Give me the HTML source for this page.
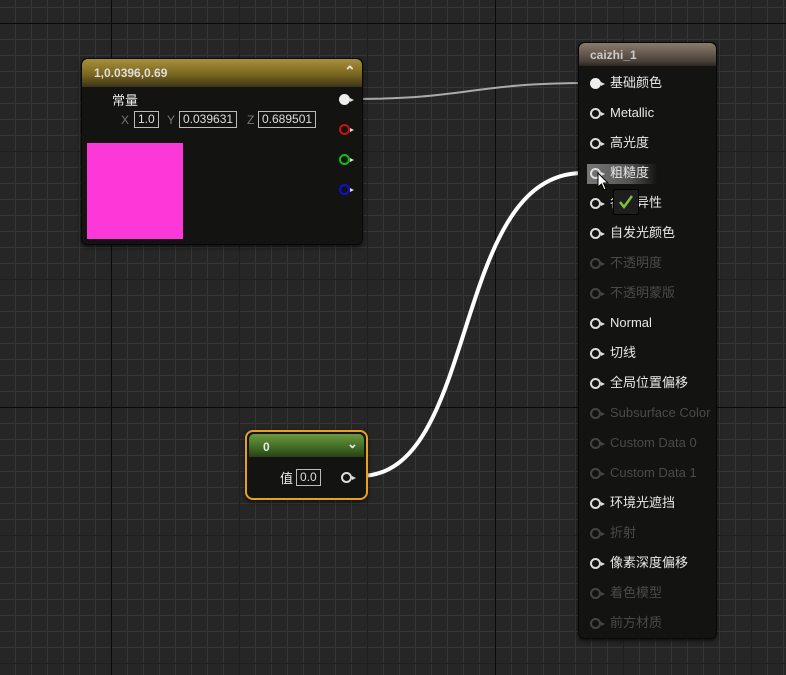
<!DOCTYPE html>
<html><head><meta charset="utf-8"><style>
*{margin:0;padding:0;box-sizing:border-box}
body{width:786px;height:675px;overflow:hidden;position:relative;font-family:"Liberation Sans","Noto Sans CJK SC",sans-serif;
background-color:#262626;
background-image:
linear-gradient(90deg,#0a0a0a 1px,transparent 1px),
linear-gradient(0deg,#0a0a0a 1px,transparent 1px),
linear-gradient(90deg,#1e1e1e 1px,transparent 1px),
linear-gradient(0deg,#1e1e1e 1px,transparent 1px),
linear-gradient(90deg,#363636 1px,transparent 1px),
linear-gradient(0deg,#363636 1px,transparent 1px);
background-size:384px 384px,384px 384px,128px 128px,128px 128px,16px 16px,16px 16px;
background-position:111px 0,0 24px,111px 0,0 24px,15px 0,0 8px;}
.node{position:absolute;background:#131412;border-radius:6px;box-shadow:0 2px 4px rgba(0,0,0,.6);border:1px solid #080808}
.t{position:absolute;color:#e8e8e8;font-size:12px;white-space:nowrap;line-height:14px}
.r{font-size:13px;line-height:15px}
.pin{position:absolute;width:11px;height:11px;border-radius:50%;border:2px solid #ddd}
.pin:after{content:"";position:absolute;right:-6px;top:1.5px;border-left:4px solid #ddd;border-top:2.5px solid transparent;border-bottom:2.5px solid transparent}
.box{position:absolute;border:1px solid #bbb;color:#ddd;font-size:12px;height:17px;line-height:15px;padding:0 3px}
.dimpin{border-color:#444}.dimpin:after{border-left-color:#444}
</style></head><body>
<svg width="786" height="675" style="position:absolute;left:0;top:0">
<path d="M352 99 C470 99 470 83 590 83" stroke="#aaa" stroke-width="2" fill="none"/>
<path d="M360 476 C480 476 450 173 583 173" stroke="#fff" stroke-width="4" fill="none"/>
</svg>
<div class="node" style="left:81px;top:58px;width:282px;height:187px">
 <div style="height:28px;border-radius:6px 6px 0 0;background:linear-gradient(180deg,#a8903a 0%,#7a6620 55%,#3c3418 100%);"></div>
 <div class="t" style="left:12px;top:7px;font-weight:bold;color:#ddd">1,0.0396,0.69</div>
 <div class="t" style="left:262px;top:5px;font-weight:bold;font-size:14px">&#8963;</div>
 <div class="t r" style="left:30px;top:34px">常量</div>
 <div class="t" style="left:39px;top:54px;color:#777">X</div>
 <div class="box" style="left:52px;top:52px">1.0</div>
 <div class="t" style="left:85px;top:54px;color:#777">Y</div>
 <div class="box" style="left:97px;top:52px">0.039631</div>
 <div class="t" style="left:165px;top:54px;color:#777">Z</div>
 <div class="box" style="left:176px;top:52px">0.689501</div>
 <div style="position:absolute;left:5px;top:84px;width:96px;height:96px;background:#fd38d9"></div>
 <div class="pin" style="left:257px;top:35px;background:#eee;border-color:#eee"></div>
 <div class="pin" style="left:257px;top:65px;border-color:#d01010"></div>
 <div class="pin" style="left:257px;top:95px;border-color:#10c010"></div>
 <div class="pin" style="left:257px;top:125px;border-color:#1010d0"></div>
</div>
<div class="node" style="left:245px;top:430px;width:123px;height:70px;border:2px solid #e8a020;border-radius:8px">
 <div style="height:23px;margin:2px 2px 0;border-radius:5px 5px 0 0;background:linear-gradient(180deg,#6a9a40,#3a6020 70%,#2a4018)"></div>
 <div class="t" style="left:16px;top:8px;font-weight:bold">0</div>
 <div class="t" style="left:100px;top:5px;font-weight:bold;font-size:13px">&#8964;</div>
 <div class="t r" style="left:33px;top:39px">值</div>
 <div class="box" style="left:49px;top:37px">0.0</div>
 <div class="pin" style="left:94px;top:40px"></div>
</div>
<div class="node" style="left:578px;top:42px;width:139px;height:597px">
 <div style="height:23px;border-radius:6px 6px 0 0;background:linear-gradient(180deg,#8a7c6c,#4a4038 80%,#2a2622)"></div>
 <div class="t" style="left:11px;top:5px;font-weight:bold;color:#ccc">caizhi_1</div>
 <div style="position:absolute;left:8px;top:121px;width:70px;height:20px;background:linear-gradient(90deg,#777,#555 60%,transparent)"></div>
</div>
<div id="rows"></div>
<script>
var rows=[["基础颜色",1],["Metallic",1],["高光度",1],["粗糙度",1],["各向异性",1],["自发光颜色",1],["不透明度",0],["不透明蒙版",0],["Normal",1],["切线",1],["全局位置偏移",1],["Subsurface Color",0],["Custom Data 0",0],["Custom Data 1",0],["环境光遮挡",1],["折射",0],["像素深度偏移",1],["着色模型",0],["前方材质",0]];
var h="";rows.forEach(function(r,i){var y=83+30*i;
h+='<div class="pin '+(r[1]?'':'dimpin')+'" style="left:590px;top:'+(y-5)+'px;'+(i==0?'background:#eee;border-color:#eee':'')+'"></div>';
h+='<div class="t r" style="left:610px;top:'+(y-8)+'px;'+(r[1]?'':'color:#4a4a4a')+'">'+r[0]+'</div>';});
document.getElementById('rows').innerHTML=h;
</script>
<div style="position:absolute;left:613px;top:189px;width:26px;height:26px;background:#1e1e1e;border:1px solid #000;border-radius:2px"><svg width="24" height="24"><path d="M6 12 L10 17 L18 6" stroke="#7fc040" stroke-width="2.5" fill="none"/></svg></div>
<svg width="14" height="20" style="position:absolute;left:597px;top:172px"><path d="M1 1 L1 15 L4.5 12 L7 18 L9 17 L6.5 11 L11 11 Z" fill="#fff" stroke="#000" stroke-width="1"/></svg>
</body></html>
